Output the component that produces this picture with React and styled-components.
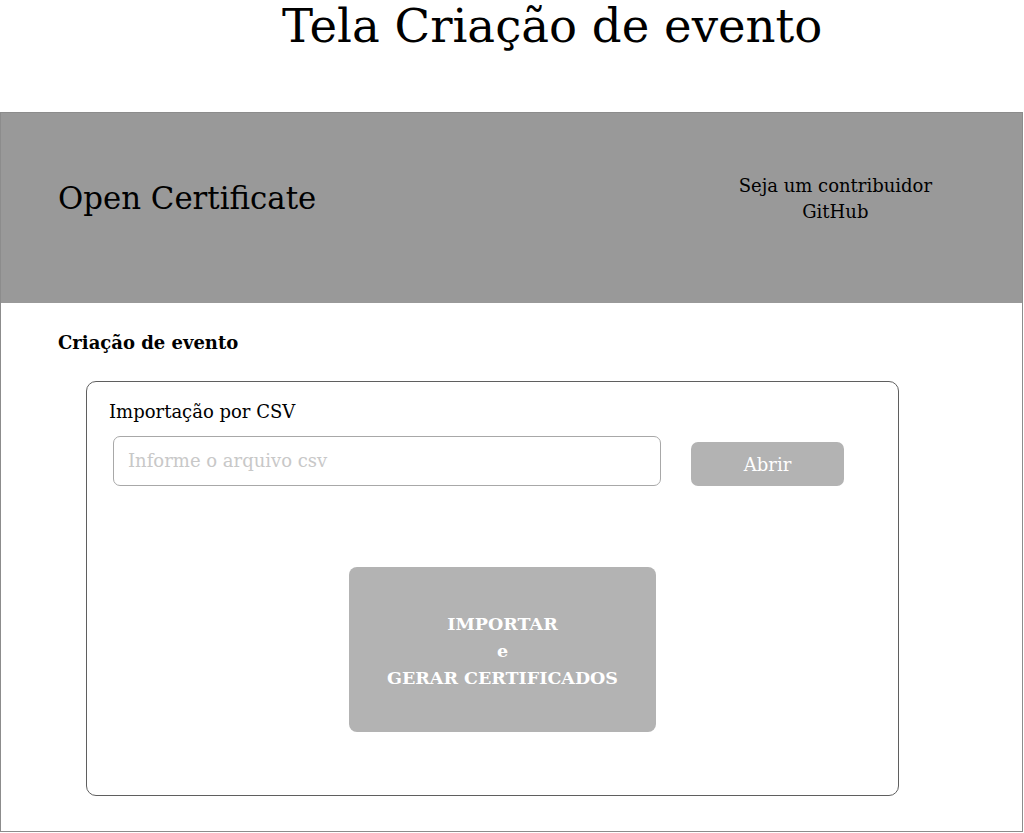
import styled, { createGlobalStyle } from "styled-components";

const GlobalStyle = createGlobalStyle`
  html, body {
    margin: 0;
    padding: 0;
    background: #fff;
  }
  body {
    font-family: "DejaVu Serif", "Liberation Serif", serif;
    color: #000;
  }
`;

const Page = styled.div`
  width: 1024px;
  height: 833px;
  display: flex;
  flex-direction: column;
  overflow: hidden;
`;

const Title = styled.h1`
  margin: 0;
  height: 112px;
  font-size: 46.6px;
  font-weight: 400;
  line-height: 52px;
  padding-left: 282px;
  box-sizing: border-box;
`;

const Frame = styled.div`
  width: 1023px;
  height: 720px;
  box-sizing: border-box;
  border: 1px solid #8c8c8c;
  display: flex;
  flex-direction: column;
`;

const Header = styled.header`
  height: 190px;
  background: #999999;
  display: flex;
  align-items: center;
  justify-content: space-between;
  padding: 0 90px 0 57px;
`;

const Brand = styled.div`
  font-size: 30.8px;
  margin-top: -20px;
`;

const Contrib = styled.div`
  font-size: 18px;
  line-height: 26px;
  text-align: center;
  margin-top: -18px;
`;

const Content = styled.main`
  padding: 29px 0 0 57px;
`;

const SectionTitle = styled.h2`
  margin: 0 0 28px;
  font-size: 18px;
  font-weight: 700;
`;

const Card = styled.section`
  margin-left: 28px;
  width: 813px;
  height: 415px;
  box-sizing: border-box;
  border: 1px solid #5f5f5f;
  border-radius: 10px;
  padding: 19px 0 0 22px;
`;

const CardLabel = styled.div`
  font-size: 18px;
  margin-bottom: 14px;
`;

const Row = styled.div`
  display: flex;
  align-items: flex-end;
  gap: 30px;
  padding-left: 4px;
`;

const FileInput = styled.input`
  width: 548px;
  height: 50px;
  box-sizing: border-box;
  border: 1px solid #a8a8a8;
  border-radius: 7px;
  padding: 0 14px 2px;
  font-family: inherit;
  font-size: 18px;
  outline: none;
  &::placeholder {
    color: #c8c8c8;
  }
`;

const Button = styled.button`
  border: none;
  border-radius: ${(p) => (p.$big ? "8px" : "7px")};
  background: #b3b3b3;
  color: #fff;
  font-family: inherit;
  font-size: ${(p) => (p.$big ? "17.5px" : "18px")};
  font-weight: ${(p) => (p.$big ? 700 : 400)};
  line-height: 27px;
  padding: 0;
`;

const OpenButton = styled(Button)`
  width: 153px;
  height: 44px;
`;

const Center = styled.div`
  display: flex;
  justify-content: center;
  margin-top: 81px;
  padding-right: 2px;
`;

const BigButton = styled(Button)`
  width: 307px;
  height: 165px;
  padding-top: 4px;
`;

export default function App() {
  return (
    <>
      <GlobalStyle />
      <Page>
        <Title>Tela Criação de evento</Title>
        <Frame>
          <Header>
            <Brand>Open Certificate</Brand>
            <Contrib>
              Seja um contribuidor
              <br />
              GitHub
            </Contrib>
          </Header>
          <Content>
            <SectionTitle>Criação de evento</SectionTitle>
            <Card>
              <CardLabel>Importação por CSV</CardLabel>
              <Row>
                <FileInput placeholder="Informe o arquivo csv" />
                <OpenButton>Abrir</OpenButton>
              </Row>
              <Center>
                <BigButton $big>
                  IMPORTAR
                  <br />e<br />
                  GERAR CERTIFICADOS
                </BigButton>
              </Center>
            </Card>
          </Content>
        </Frame>
      </Page>
    </>
  );
}
